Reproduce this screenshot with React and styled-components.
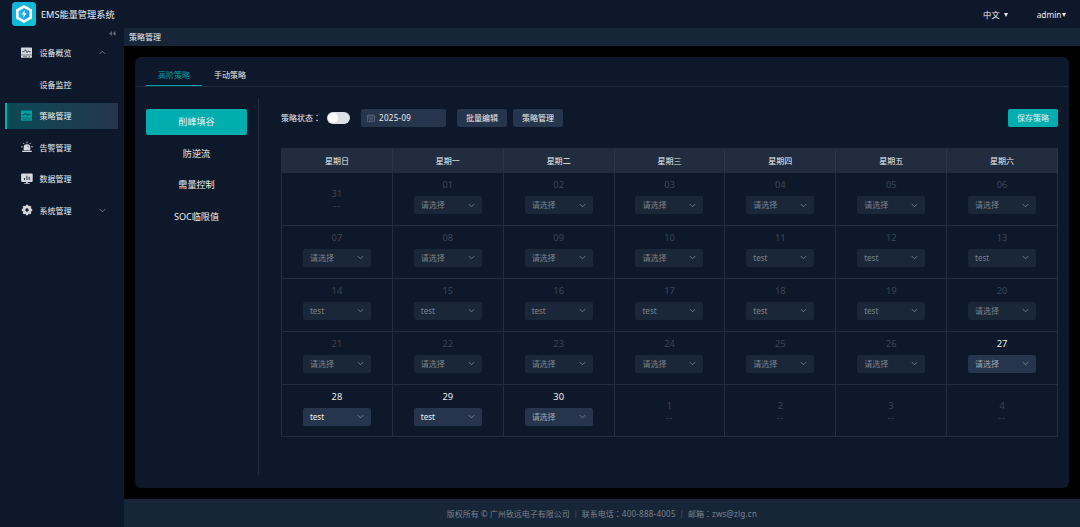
import React, { useState } from "react";
import styled, { createGlobalStyle } from "styled-components";

const GlobalStyle = createGlobalStyle`
  * {
    box-sizing: border-box;
  }

  body {
    margin: 0;
    background: #000;
    color: #eceef0;
    font-family: "Noto Sans", "Noto Sans CJK SC", sans-serif;
    font-size: 8px;
    line-height: 12px;
  }

  button {
    font-family: inherit;
    border: none;
    padding: 0;
    cursor: pointer;
  }
`;

const Page = styled.div`
  width: 1080px;
  height: 527px;
  display: flex;
  flex-direction: column;
  overflow: hidden;
`;

const Header = styled.header`
  height: 28px;
  flex: none;
  display: flex;
  align-items: center;
  padding: 0 14px 0 12px;
  background: #0d182a;
`;

const Title = styled.h1`
  margin: 2px 0 0 5px;
  font-size: 9.2px;
  font-weight: 400;
  flex: 1;
`;

const HeaderItem = styled.div`
  display: flex;
  align-items: center;
  gap: ${({ $gap }) => $gap}px;
  margin: 1px 0 0 ${({ $left }) => $left || 0}px;
  font-size: ${({ $size }) => $size}px;
`;

const Caret = styled.span`
  border: 2.5px solid transparent;
  border-top: 4px solid #e8eaed;
  border-bottom: none;
`;

const Body = styled.div`
  flex: 1;
  display: flex;
  min-height: 0;
`;

const Sidebar = styled.nav`
  width: 124px;
  flex: none;
  background: #0d182a;
`;

const Collapse = styled.div`
  height: 11.5px;
  display: flex;
  justify-content: flex-end;
  align-items: center;
  padding-right: 8px;
`;

const MenuItem = styled.div`
  height: 26px;
  margin: 0 6px 5.5px 5px;
  padding: 0 12px 0 ${({ $active }) => ($active ? 14 : 16)}px;
  display: flex;
  align-items: center;
  background: ${({ $active }) =>
    $active ? "linear-gradient(90deg, #0a4a55, #26354c)" : "none"};
  border-left: ${({ $active }) => ($active ? "2px solid #00aeb0" : "none")};
`;

const IconBox = styled.span`
  width: 12px;
  height: 12px;
  margin-right: 6.5px;
  color: ${({ $active }) => ($active ? "#00a0a3" : "#d5d8dc")};

  svg {
    display: block;
  }
`;

const MenuText = styled.span`
  flex: 1;
  padding-top: 1px;
`;

const Main = styled.div`
  flex: 1;
  display: flex;
  flex-direction: column;
`;

const Crumb = styled.div`
  height: 18px;
  padding-left: 5px;
  background: #172538;
  line-height: 18px;
`;

const Card = styled.main`
  flex: 1;
  margin: 11px 11px 11px;
  border-radius: 6px;
  background: #0d182a;
  display: flex;
  flex-direction: column;
`;

const Tabs = styled.div`
  height: 30px;
  padding: 0 11px;
  display: flex;
  border-bottom: 1px solid #1f2d3b;
`;

const Tab = styled.div`
  width: 56px;
  height: 29px;
  padding-top: 12px;
  text-align: center;
  cursor: pointer;
  color: ${({ $active }) => ($active ? "#009fa3" : "#e8eaed")};
  border-bottom: 1px solid ${({ $active }) => ($active ? "#009fa3" : "transparent")};
`;

const Content = styled.div`
  flex: 1;
  display: flex;
  padding: 11px 11px 13px;
`;

const Modes = styled.div`
  width: 113px;
  padding: 11px 11px 0 0;
  border-right: 1px solid #1f2d3b;
`;

const Mode = styled.div`
  height: 26px;
  margin-bottom: 5.5px;
  line-height: 26px;
  font-size: 9.1px;
  text-align: center;
  border-radius: 2px;
  cursor: pointer;
  background: ${({ $active }) => ($active ? "#00aeb0" : "none")};
`;

const Panel = styled.section`
  flex: 1;
  padding: 11px 0 0 22px;
`;

const Toolbar = styled.div`
  height: 18px;
  display: flex;
  align-items: center;
`;

/* the TC face centres the full-width colon in its box */
const Colon = styled.span`
  font-family: "Noto Sans CJK TC", sans-serif;
`;

const Switch = styled.span`
  width: 23px;
  height: 12px;
  margin: 0 11px 0 6px;
  padding: 1px;
  border-radius: 6px;
  background: #dcdfe6;

  &::after {
    content: "";
    display: block;
    width: 10px;
    height: 10px;
    border-radius: 50%;
    background: #fff;
  }
`;

const DateInput = styled.div`
  width: 85px;
  height: 18px;
  margin-right: 11px;
  padding-left: 6px;
  display: flex;
  align-items: center;
  gap: 4px;
  border-radius: 2px;
  letter-spacing: 0.3px;
  background: #26354c;
`;

const Button = styled.button`
  width: 50px;
  height: 18px;
  margin-right: ${({ $primary }) => ($primary ? 0 : 6)}px;
  margin-left: ${({ $primary }) => ($primary ? "auto" : 0)};
  border-radius: 2px;
  font-size: 8px;
  line-height: 18px;
  color: #eceef0;
  background: ${({ $primary }) => ($primary ? "#00aeb0" : "#26354c")};
`;

const Calendar = styled.div`
  margin-top: 21px;
  width: 777px;
  display: grid;
  grid-template-columns: repeat(7, 1fr);
  grid-template-rows: 24px repeat(5, 52.9px);
  border-top: 1px solid #212f3d;
  border-left: 1px solid #212f3d;
`;

const WeekDay = styled.div`
  display: flex;
  align-items: center;
  justify-content: center;
  background: #212d3e;
  border-right: 1px solid #2a3747;
  border-bottom: 1px solid #212f3d;
`;

const Day = styled.div`
  display: flex;
  flex-direction: column;
  align-items: center;
  padding-top: ${({ $outside }) => ($outside ? 15 : 6)}px;
  border-right: 1px solid #212f3d;
  border-bottom: 1px solid #212f3d;
  font-size: 9.3px;
  color: ${({ $enabled }) => ($enabled ? "#eceef0" : "#3b4657")};
`;

const Dashes = styled.span`
  letter-spacing: 0.8px;
`;

const Select = styled.div`
  width: 68px;
  height: 18px;
  margin-top: 5px;
  padding: 0 7px;
  display: flex;
  align-items: center;
  justify-content: space-between;
  border-radius: 2px;
  font-size: 8px;
  background: ${({ $enabled }) => ($enabled ? "#26354c" : "#1a2739")};
  color: ${({ $enabled, $filled }) =>
    $enabled ? ($filled ? "#eceef0" : "#a0a5ad") : "#7b818a"};
`;

const Footer = styled.footer`
  height: 28px;
  background: #172538;
  color: #7c828b;
  line-height: 29px;
  text-align: center;
  white-space: pre;
`;

const Latin = styled.span`
  letter-spacing: 0.25px;
`;

const Logo = () => (
  <svg width="24" height="24" viewBox="0 0 24 24">
    <defs>
      <linearGradient id="logo" x1="0" y1="0" x2="1" y2="1">
        <stop offset="0" stopColor="#16aedb" />
        <stop offset="1" stopColor="#0fc3d2" />
      </linearGradient>
      <linearGradient id="core" x1="0" y1="0" x2="1" y2="0">
        <stop offset="0" stopColor="#1fc0e6" />
        <stop offset="1" stopColor="#1890ea" />
      </linearGradient>
    </defs>
    <rect width="24" height="24" rx="3.5" fill="url(#logo)" />
    <path d="M12 3l8 4.600v8.800L12 21l-8-4.600V7.600z" fill="#fff" />
    <path d="M12 6l5.400 3.100v5.800L12 18l-5.400-3.100V9.100z" fill="url(#core)" />
    <path d="M13 8l-3.400 4.600h2.200l-.7 3.300 3.500-4.600h-2.200z" fill="#fff" />
  </svg>
);

const DeviceIcon = () => (
  <svg width="11" height="11" viewBox="0 0 11 11">
    <rect x="0" y="0.500" width="11" height="7.200" rx=".5" fill="currentColor" />
    <path
      d="M1.200 4.700h2l1.200-2 1.700 3 1.100-2 .8 1h1.800"
      fill="none"
      stroke="#142336"
      strokeWidth=".7"
    />
    <path d="M0 8.200h11v2.500H0z" fill="currentColor" />
    <path d="M2 9.400h4M7.500 9.400h1.500" stroke="#142336" strokeWidth=".5" />
  </svg>
);

const AlarmIcon = () => (
  <svg width="12" height="12" viewBox="0 0 12 12">
    <path
      d="M2.700 9.200V6.500a3.300 3.300 0 0 1 6.600 0v2.700zM1.200 9.700h9.600V11H1.200z"
      fill="currentColor"
    />
    <path
      d="M6 .6v1.700M2.200 1.900l1.100 1.200M9.800 1.900L8.700 3.100M.2 5.800h1.600M10.200 5.800h1.600"
      stroke="currentColor"
      strokeWidth=".9"
    />
    <path d="M6.200 5a1.500 1.500 0 0 1 1.500 1.500" fill="none" stroke="#142336" strokeWidth=".5" />
  </svg>
);

const DataIcon = () => (
  <svg width="12" height="12" viewBox="0 0 12 12">
    <rect x=".1" y=".6" width="11.600" height="8.300" rx=".8" fill="currentColor" />
    <path d="M3.500 5v2M5.900 2.800V7M8.200 3.900V7" stroke="#142336" strokeWidth=".9" />
    <path d="M5.100 8.800h1.700v1.100h1.900v.9H3.200v-.9h1.900z" fill="currentColor" />
  </svg>
);

const GearIcon = () => (
  <svg width="12" height="12" viewBox="0 0 12 12">
    <path
      d="M6 .8v10.400M.8 6h10.400M2.300 2.300l7.400 7.400M9.700 2.300L2.300 9.700"
      stroke="currentColor"
      strokeWidth="2.300"
    />
    <circle cx="6" cy="6" r="4.200" fill="currentColor" />
    <circle cx="6" cy="6" r="1.700" fill="#0d182a" />
  </svg>
);

const Chevron = ({ up }) => (
  <svg width="7" height="5" viewBox="0 0 7 5">
    <path
      d={up ? "M.8 3.900L3.500 1.200l2.700 2.700" : "M.8 1.100l2.700 2.700 2.700-2.700"}
      fill="none"
      stroke="#848b96"
      strokeWidth=".8"
    />
  </svg>
);

const CollapseIcon = () => (
  <svg width="7" height="5" viewBox="0 0 7 5">
    <path
      d="M2.700.6v3.800L.5 2.500zM6.200.6v3.800L4 2.500z"
      fill="#5b6472"
      stroke="#858c97"
      strokeWidth=".4"
    />
  </svg>
);

const CalendarIcon = () => (
  <svg width="8" height="8" viewBox="0 0 8 8">
    <path
      d="M.5 1.200h7v6.300h-7zM.5 3h7M2.300.3v1.600M5.700.3v1.600M2 4.600h4M2 6h4"
      fill="none"
      stroke="#7f8793"
      strokeWidth=".5"
    />
  </svg>
);

const menu = [
  { text: "设备概览", icon: DeviceIcon, arrow: "up" },
  { text: "设备监控" },
  { text: "策略管理", icon: DeviceIcon, active: true },
  { text: "告警管理", icon: AlarmIcon },
  { text: "数据管理", icon: DataIcon },
  { text: "系统管理", icon: GearIcon, arrow: "down" },
];

const modes = ["削峰填谷", "防逆流", "需量控制", "SOC临限值"];
const weekDays = ["日", "一", "二", "三", "四", "五", "六"];

const testDays = [11, 12, 13, 14, 15, 16, 17, 18, 19, 28, 29];

const days = [{ label: "31", outside: true }];
for (let i = 1; i <= 30; i++) {
  days.push({
    label: String(i).padStart(2, "0"),
    enabled: i >= 27,
    value: testDays.includes(i) ? "test" : "",
  });
}
for (let i = 1; i <= 4; i++) {
  days.push({ label: String(i), outside: true });
}

const App = () => {
  const [tab, setTab] = useState("高阶策略");
  const [mode, setMode] = useState("削峰填谷");

  return (
    <Page>
      <GlobalStyle />
      <Header>
        <Logo />
        <Title>EMS能量管理系统</Title>
        <HeaderItem $gap={4} $size={8.3}>
          中文 <Caret />
        </HeaderItem>
        <HeaderItem $gap={0.5} $left={29} $size={8.3}>
          admin <Caret />
        </HeaderItem>
      </Header>

      <Body>
        <Sidebar>
          <Collapse>
            <CollapseIcon />
          </Collapse>
          {menu.map(({ text, icon: Icon, active, arrow }) => (
            <MenuItem key={text} $active={active}>
              <IconBox $active={active}>{Icon && <Icon />}</IconBox>
              <MenuText>{text}</MenuText>
              {arrow && <Chevron up={arrow === "up"} />}
            </MenuItem>
          ))}
        </Sidebar>

        <Main>
          <Crumb>策略管理</Crumb>
          <Card>
            <Tabs>
              {["高阶策略", "手动策略"].map((t) => (
                <Tab key={t} $active={t === tab} onClick={() => setTab(t)}>
                  {t}
                </Tab>
              ))}
            </Tabs>
            <Content>
              <Modes>
                {modes.map((m) => (
                  <Mode key={m} $active={m === mode} onClick={() => setMode(m)}>
                    {m}
                  </Mode>
                ))}
              </Modes>
              <Panel>
                <Toolbar>
                  <span>
                    策略状态<Colon>：</Colon>
                  </span>
                  <Switch />
                  <DateInput>
                    <CalendarIcon />
                    2025-09
                  </DateInput>
                  <Button>批量编辑</Button>
                  <Button>策略管理</Button>
                  <Button $primary>保存策略</Button>
                </Toolbar>
                <Calendar>
                  {weekDays.map((d) => (
                    <WeekDay key={d}>星期{d}</WeekDay>
                  ))}
                  {days.map(({ label, outside, enabled, value }) => (
                    <Day key={label} $outside={outside} $enabled={enabled}>
                      <span>{label}</span>
                      {outside ? (
                        <Dashes>--</Dashes>
                      ) : (
                        <Select $enabled={enabled} $filled={!!value}>
                          {value || "请选择"}
                          <Chevron />
                        </Select>
                      )}
                    </Day>
                  ))}
                </Calendar>
              </Panel>
            </Content>
          </Card>
          <Footer>
            版权所有 © 广州致远电子有限公司 ｜ 联系电话<Colon>：</Colon>
            <Latin>400-888-4005</Latin> ｜ 邮箱<Colon>：</Colon>
            <Latin>zws@zlg.cn</Latin>
          </Footer>
        </Main>
      </Body>
    </Page>
  );
};

export default App;
